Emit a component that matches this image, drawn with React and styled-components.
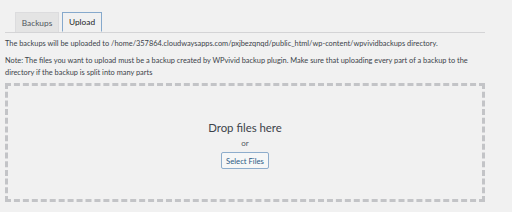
import React from 'react';
import styled, { createGlobalStyle } from 'styled-components';

const GlobalStyle = createGlobalStyle`
  html, body {
    margin: 0;
    background: #f1f1f1;
  }
  body {
    font-family: Lato, "Noto Sans", sans-serif;
    color: #3c434a;
  }
`;

const Page = styled.div`
  width: 480px;
  padding: 12px 0 0 5px;
`;

const TabBar = styled.div`
  display: flex;
  gap: 3px;
  padding-left: 10px;
  border-bottom: 1px solid #d4d4d6;
  height: 20px;
`;

const Tab = styled.div`
  display: flex;
  align-items: center;
  justify-content: center;
  width: ${p => p.$w}px;
  font-size: 8.3px;
  color: ${p => (p.$active ? '#1d2327' : '#50575e')};
  background: ${p => (p.$active ? '#f1f1f1' : '#e4e4e4')};
  border: 1px solid ${p => (p.$active ? '#86a9cc' : '#dcdcde')};
  border-bottom: ${p => (p.$active ? '1px solid #f1f1f1' : 'none')};
  height: 20px;
  box-sizing: border-box;
  margin-bottom: ${p => (p.$active ? '-1px' : '0')};
`;

const Info = styled.p`
  margin: 5px 0 0;
  font-size: 7.4px;
  line-height: 12px;
  color: #3c434a;
  white-space: ${p => (p.$nowrap ? 'nowrap' : 'normal')};
`;

const DropZone = styled.div`
  margin-top: 4px;
  height: 119px;
  box-sizing: border-box;
  border: 3px dashed #c3c4c7;
  display: flex;
  flex-direction: column;
  align-items: center;
  justify-content: center;
  padding-top: 4px;
`;

const DropTitle = styled.div`
  font-size: 11.4px;
  color: #3c434a;
  line-height: 16px;
`;

const Or = styled.div`
  font-size: 8px;
  color: #50575e;
  margin-top: 1px;
  line-height: 12px;
`;

const SelectButton = styled.button`
  margin-top: 3px;
  height: 17px;
  width: 48px;
  padding: 0;
  font-family: inherit;
  font-size: 7.7px;
  color: #2c5a85;
  background: #f6f7f7;
  border: 1px solid #8eadcc;
  border-radius: 2px;
`;

export default function App() {
  return (
    <>
      <GlobalStyle />
      <Page>
        <TabBar>
          <Tab $w={44}>Backups</Tab>
          <Tab $w={40} $active>Upload</Tab>
        </TabBar>
        <Info $nowrap>
          The backups will be uploaded to /home/357864.cloudwaysapps.com/pxjbezqnqd/public_html/wp-content/wpvividbackups directory.
        </Info>
        <Info>
          Note: The files you want to upload must be a backup created by WPvivid backup plugin. Make sure that uploading every part of a backup to the directory if the backup is split into many parts
        </Info>
        <DropZone>
          <DropTitle>Drop files here</DropTitle>
          <Or>or</Or>
          <SelectButton>Select Files</SelectButton>
        </DropZone>
      </Page>
    </>
  );
}
